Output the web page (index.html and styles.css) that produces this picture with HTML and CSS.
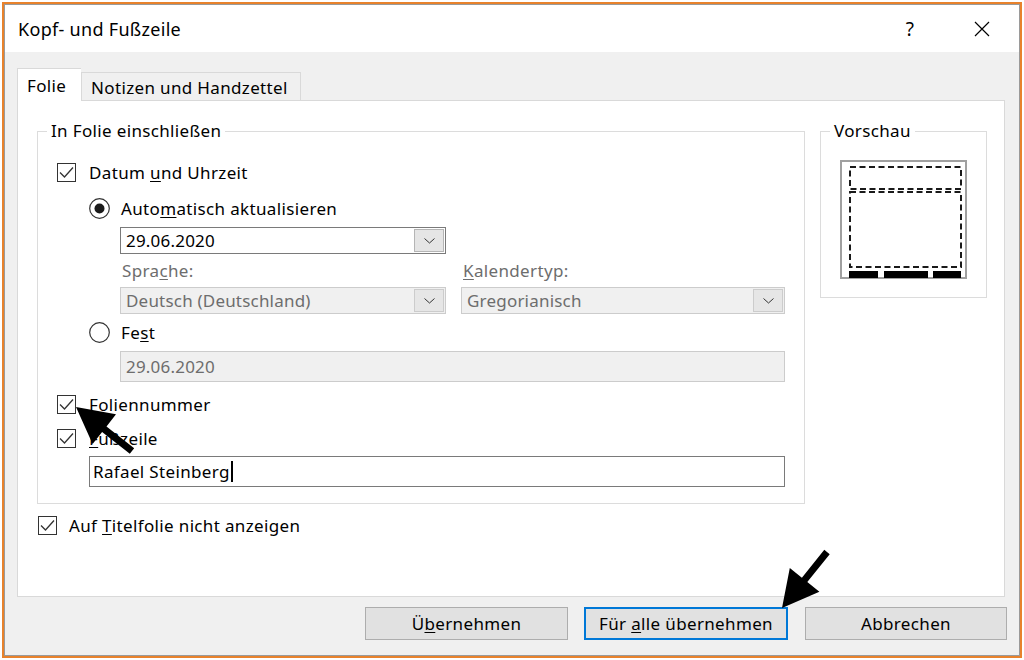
FILE: index.html
```html
<!DOCTYPE html>
<html lang="de">
<head>
<meta charset="utf-8">
<title>Kopf- und Fußzeile</title>
<link rel="stylesheet" href="styles.css">
</head>
<body>
<div class="frame">
  <div class="window">
    <div class="titlebar">
      <div class="title">Kopf- und Fußzeile</div>
      <div class="tb-buttons">
        <span class="help">?</span>
        <span class="close"><svg width="16" height="16" viewBox="0 0 16 16"><path d="M1 1 L15 15 M15 1 L1 15" stroke="#000" stroke-width="1.2" fill="none"/></svg></span>
      </div>
    </div>
    <div class="body">
      <div class="tabs">
        <div class="tab active">Folie</div>
        <div class="tab">Notizen und Handzettel</div>
      </div>
      <div class="panel">
        <div class="groups">
          <fieldset class="group main">
            <legend>In Folie einschließen</legend>
            <div class="row chk r-datum">
              <svg class="cb" width="19" height="19" viewBox="0 0 19 19"><rect x="0.5" y="0.5" width="18" height="18" fill="#fff" stroke="#333"/><polyline points="3,9.5 7.5,14 16,4.5" fill="none" stroke="#333" stroke-width="1.3"/></svg>
              <span>Datum <u>u</u>nd Uhrzeit</span>
            </div>
            <div class="row radio r-auto">
              <svg class="rb" width="21" height="21" viewBox="0 0 21 21"><circle cx="10.5" cy="10.5" r="9.8" fill="#fff" stroke="#333" stroke-width="1.2"/><circle cx="10.5" cy="10.5" r="5" fill="#1a1a1a"/></svg>
              <span>Auto<u>m</u>atisch aktualisieren</span>
            </div>
            <div class="combo c-date">
              <span class="ctext">29.06.2020</span>
              <span class="dd"><svg width="11" height="6" viewBox="0 0 11 6"><polyline points="0.5,0.5 5.5,5 10.5,0.5" fill="none" stroke="#333" stroke-width="1"/></svg></span>
            </div>
            <div class="pair labels">
              <div class="lbl w1">Spra<u>c</u>he:</div>
              <div class="lbl w2"><u>K</u>alendertyp:</div>
            </div>
            <div class="pair combos">
              <div class="combo disabled w1">
                <span class="ctext">Deutsch (Deutschland)</span>
                <span class="dd"><svg width="11" height="6" viewBox="0 0 11 6"><polyline points="0.5,0.5 5.5,5 10.5,0.5" fill="none" stroke="#333" stroke-width="1"/></svg></span>
              </div>
              <div class="combo disabled w2">
                <span class="ctext">Gregorianisch</span>
                <span class="dd"><svg width="11" height="6" viewBox="0 0 11 6"><polyline points="0.5,0.5 5.5,5 10.5,0.5" fill="none" stroke="#333" stroke-width="1"/></svg></span>
              </div>
            </div>
            <div class="row radio r-fest">
              <svg class="rb" width="21" height="21" viewBox="0 0 21 21"><circle cx="10.5" cy="10.5" r="9.8" fill="#fff" stroke="#333" stroke-width="1.2"/></svg>
              <span>Fe<u>s</u>t</span>
            </div>
            <div class="textbox disabled fest">29.06.2020</div>
            <div class="row chk r-folnr">
              <svg class="cb" width="19" height="19" viewBox="0 0 19 19"><rect x="0.5" y="0.5" width="18" height="18" fill="#fff" stroke="#333"/><polyline points="3,9.5 7.5,14 16,4.5" fill="none" stroke="#333" stroke-width="1.3"/></svg>
              <span>Foliennummer</span>
            </div>
            <div class="row chk r-fuss">
              <svg class="cb" width="19" height="19" viewBox="0 0 19 19"><rect x="0.5" y="0.5" width="18" height="18" fill="#fff" stroke="#333"/><polyline points="3,9.5 7.5,14 16,4.5" fill="none" stroke="#333" stroke-width="1.3"/></svg>
              <span><u>F</u>ußzeile</span>
            </div>
            <div class="textbox footer">Rafael Steinberg<span class="caret"></span></div>
          </fieldset>
          <fieldset class="group preview">
            <legend>Vorschau</legend>
            <svg class="pv" width="127" height="119" viewBox="0 0 127 119">
              <rect x="1" y="1" width="125" height="117" fill="#fff" stroke="#a0a0a0" stroke-width="2"/>
              <rect x="10" y="7" width="111" height="22" fill="none" stroke="#1a1a1a" stroke-width="2" stroke-dasharray="6 3.5"/>
              <rect x="10" y="32" width="111" height="75" fill="none" stroke="#1a1a1a" stroke-width="2" stroke-dasharray="6 3.5"/>
              <rect x="9" y="111" width="29" height="7" fill="#000"/>
              <rect x="44" y="111" width="44" height="7" fill="#000"/>
              <rect x="93" y="111" width="28" height="7" fill="#000"/>
            </svg>
          </fieldset>
        </div>
        <div class="row chk r-titel">
          <svg class="cb" width="19" height="19" viewBox="0 0 19 19"><rect x="0.5" y="0.5" width="18" height="18" fill="#fff" stroke="#333"/><polyline points="3,9.5 7.5,14 16,4.5" fill="none" stroke="#333" stroke-width="1.3"/></svg>
          <span>Auf <u>T</u>itelfolie nicht anzeigen</span>
        </div>
      </div>
      <div class="buttons">
        <div class="btn b1">Ü<u>b</u>ernehmen</div>
        <div class="btn b2 default">Für <u>a</u>lle übernehmen</div>
        <div class="btn b3">Abbrechen</div>
      </div>
    </div>
  </div>
</div>
<svg class="arrows" width="1024" height="660" viewBox="0 0 1024 660">
  <polygon points="76,407 116,414.3 106.5,426.4 134.2,448.2 129.8,453.8 102.1,432 92.6,444.1" fill="#000"/>
  <polygon points="782,608 819.4,591.8 807.3,582.1 829.7,554.2 824.3,549.8 801.9,577.7 789.8,568" fill="#000"/>
</svg>
</body>
</html>
```
FILE: styles.css
```css
body {
  margin: 0;
  background: #fff;
  font-family: "Noto Sans", "Open Sans", sans-serif;
  font-size: 17px;
  letter-spacing: 0.35px;
  color: #000;
}

u {
  text-decoration-thickness: 1px;
  text-underline-offset: 2px;
}

.frame {
  margin: 2px;
  width: 1020px;
  height: 656px;
  box-sizing: border-box;
  border: 2px solid #e8822c;
}

.window {
  height: 100%;
  box-sizing: border-box;
  border: 1px solid #9a9a9a;
  display: flex;
  flex-direction: column;
  background: #f0f0f0;
}

.titlebar {
  height: 47px;
  flex: none;
  background: #fff;
  display: flex;
  align-items: center;
  padding-left: 13px;
}

.title {
  font-size: 18px;
  letter-spacing: 0.3px;
  line-height: 24px;
}

.tb-buttons {
  margin-left: auto;
  display: flex;
  align-items: center;
  padding-right: 14px;
}

.help {
  width: 30px;
  text-align: center;
  font-size: 19px;
  margin-right: 34px;
}

.close {
  width: 46px;
  height: 30px;
  display: flex;
  align-items: center;
  justify-content: center;
}

.body {
  flex: 1;
  display: flex;
  flex-direction: column;
  padding: 16px 12px 0 12px;
}

.tabs {
  display: flex;
  align-items: flex-end;
  height: 32px;
  position: relative;
  z-index: 1;
}

.tab {
  box-sizing: border-box;
  height: 28px;
  line-height: 29px;
  padding: 0 9px;
  background: #f0f0f0;
  border: 1px solid #d9d9d9;
  border-left: none;
  border-bottom: none;
}

.tab.active {
  height: 33px;
  line-height: 33px;
  margin-bottom: -1px;
  width: 64px;
  padding: 0 0 0 9px;
  background: #fff;
  border-left: 1px solid #d9d9d9;
  border-right: none;
}

.tab:not(.active) {
  width: 220px;
  border-left: 1px solid #d9d9d9;
}

.panel {
  height: 497px;
  box-sizing: border-box;
  background: #fff;
  border: 1px solid #d9d9d9;
  margin-right: 2px;
  padding: 20px 17px 0 19px;
  display: flex;
  flex-direction: column;
}

.groups {
  display: flex;
  gap: 15px;
  align-items: flex-start;
}

fieldset {
  margin: 0;
  padding: 0;
  border: 1px solid #dcdcdc;
  min-width: 0;
  box-sizing: border-box;
}

legend {
  margin-left: 9px;
  padding: 0 4px;
  line-height: 20px;
  font-size: 17px;
}

.main {
  width: 768px;
  padding: 20px 0 16px 0;
  display: flex;
  flex-direction: column;
}

.preview {
  width: 167px;
  padding: 19px 0 18px 0;
}

.pv {
  display: block;
  margin: 0 auto;
}

.row {
  display: flex;
  align-items: center;
}

.row svg {
  flex: none;
  display: block;
}

.chk {
  height: 22px;
  gap: 13px;
  margin-left: 19px;
}

.radio {
  height: 20px;
  gap: 11px;
  margin-left: 51px;
}

.r-auto { margin-top: 15px; }
.r-fest { margin-top: 8px; }
.r-folnr { margin-top: 11px; }
.r-fuss { margin-top: 12px; }

.r-titel {
  margin-top: 10px;
  margin-left: 1px;
  gap: 12px;
}

.combo {
  box-sizing: border-box;
  height: 27px;
  border: 1px solid #7a7a7a;
  background: #fff;
  display: flex;
  align-items: stretch;
}

.ctext {
  flex: 1;
  padding-left: 5px;
  line-height: 25px;
  white-space: nowrap;
  letter-spacing: 0.2px;
}

.dd {
  width: 30px;
  margin: 1px;
  box-sizing: border-box;
  border: 1px solid #b5b5b5;
  background: #e5e5e5;
  display: flex;
  align-items: center;
  justify-content: center;
}

.c-date {
  margin-top: 9px;
  margin-left: 82px;
  width: 326px;
}

.pair {
  display: flex;
  gap: 15px;
  margin-left: 82px;
}

.w1 { width: 326px; }
.w2 { width: 324px; }

.labels {
  margin-top: 7px;
  height: 20px;
  line-height: 20px;
}

.lbl {
  color: #6d6d6d;
  padding-left: 2px;
  box-sizing: border-box;
}

.combos {
  margin-top: 6px;
}

.combo.disabled {
  border-color: #cccccc;
  background: #f0f0f0;
  color: #6d6d6d;
}

.combo.disabled .dd {
  border-color: #cccccc;
  background: #e6e6e6;
}

.textbox {
  box-sizing: border-box;
  height: 31px;
  line-height: 29px;
  padding-left: 5px;
  border: 1px solid #7a7a7a;
  background: #fff;
  display: flex;
  align-items: center;
}

.textbox.disabled {
  border-color: #cccccc;
  background: #f0f0f0;
  color: #6d6d6d;
  letter-spacing: 0.2px;
}

.fest {
  margin-top: 9px;
  margin-left: 82px;
  width: 665px;
}

.footer {
  margin-top: 7px;
  margin-left: 51px;
  width: 696px;
  padding-left: 3px;
}

.caret {
  display: inline-block;
  width: 2px;
  height: 21px;
  background: #000;
  margin-left: 1px;
}

.buttons {
  display: flex;
  justify-content: flex-end;
  margin-top: 10px;
  height: 33px;
}

.btn {
  box-sizing: border-box;
  height: 33px;
  line-height: 31px;
  text-align: center;
  background: #e1e1e1;
  border: 1px solid #adadad;
}

.btn.default {
  border: 2px solid #0078d7;
  line-height: 29px;
}

.b1 { width: 203px; }
.b2 { width: 204px; margin-left: 16px; }
.b3 { width: 202px; margin-left: 17px; }

.arrows {
  position: absolute;
  left: 0;
  top: 0;
  pointer-events: none;
}
```
